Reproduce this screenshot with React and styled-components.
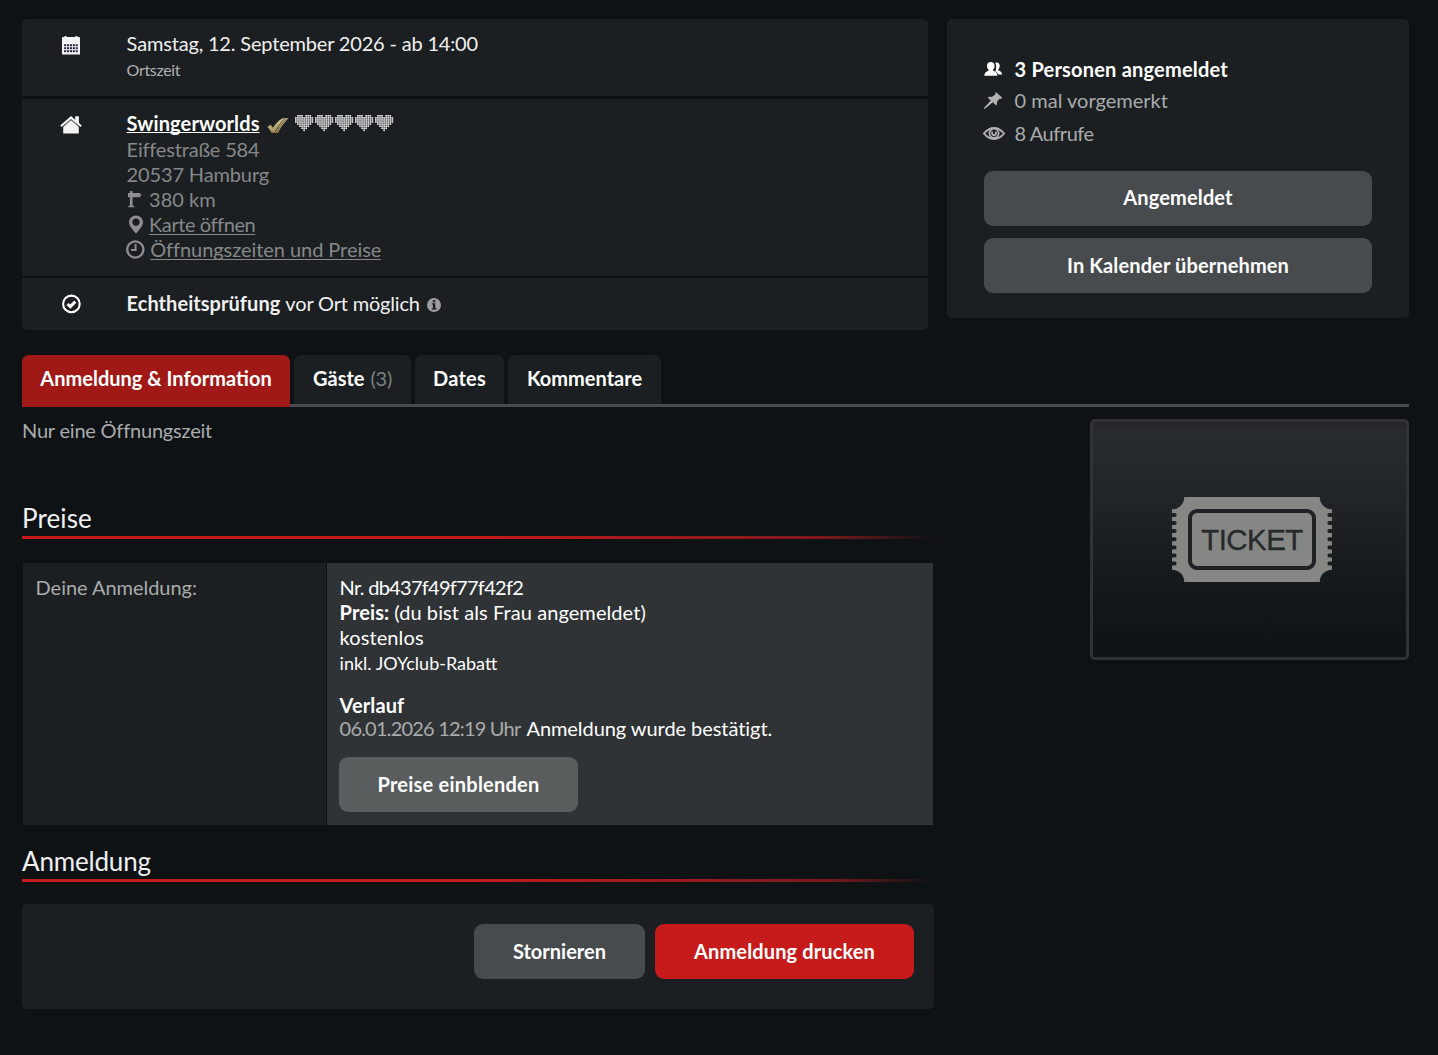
import React from "react";
import styled, { createGlobalStyle } from "styled-components";

const GlobalStyle = createGlobalStyle`
  * { box-sizing: border-box; }
  body {
    margin: 0;
    background: #0e1215;
    color: #fff;
    font: 400 20px/25px Lato, "Liberation Sans", sans-serif;
  }
`;

const Page = styled.main`
  width: 1438px;
  min-height: 1055px;
  padding: 19px 29px 0 22px;
`;

const Text = styled.span`
  color: ${(p) => p.$color || "inherit"};
  font-size: ${(p) => p.$size || 20}px;
  font-weight: ${(p) => (p.$bold ? 700 : 400)};
  letter-spacing: ${(p) => p.$track || 0}px;
  white-space: nowrap;
`;

const Link = styled.a`
  color: ${(p) => p.$color || "inherit"};
  font-weight: ${(p) => (p.$bold ? 700 : 400)};
  letter-spacing: ${(p) => p.$track || 0}px;
  text-decoration: underline;
  text-decoration-thickness: 1px;
  text-underline-offset: ${(p) => (p.$bold ? 1 : 2)}px;
  text-decoration-skip-ink: none;
  white-space: nowrap;
`;

const Icon = styled.svg`
  display: block;
  flex: none;
  overflow: visible;
`;

const Top = styled.header`
  display: flex;
  align-items: flex-start;
  gap: 19px;
`;

const Facts = styled.section`
  width: 906px;
  display: grid;
  grid-template-rows: 77px 177px 52px;
  row-gap: 2.5px;
  height: 311px;
  border-radius: 5px;
  overflow: hidden;
`;

const Fact = styled.div`
  display: grid;
  grid-template-columns: 66.6px 1fr;
  padding: ${(p) => p.$top || 12}px 0 0 38px;
  background: #1b1f21;
`;

const FactIcon = styled.div`
  padding-top: ${(p) => p.$top || 0}px;
`;

const FactBody = styled.div`
  display: flex;
  flex-direction: column;
`;

const Line = styled.div`
  display: flex;
  align-items: center;
  height: ${(p) => p.$height || 25}px;
  line-height: ${(p) => p.$height || 25}px;
  gap: ${(p) => p.$gap || 0}px;
  color: ${(p) => p.$color || "inherit"};
`;

const Venue = styled(Line)`
  align-items: flex-start;
  margin-bottom: 1px;
`;

const VenueIcon = styled.div`
  padding-top: ${(p) => p.$top}px;
  margin-left: ${(p) => p.$left}px;
`;

const SmallIcon = styled.div`
  width: ${(p) => p.$width || 23.1}px;
  margin-left: -0.6px;
  flex: none;
`;

const Stats = styled.aside`
  width: 462px;
  height: 299px;
  padding: 38px 37px 0;
  border-radius: 5px;
  background: #1b1f21;
`;

const StatList = styled.div`
  display: flex;
  flex-direction: column;
  margin-bottom: 25px;
`;

const StatLine = styled(Line)`
  margin-top: ${(p) => p.$above || 0}px;
`;

const StatIcon = styled.div`
  width: 31.6px;
  margin-left: -1px;
  padding-bottom: ${(p) => p.$lift || 0}px;
  flex: none;
`;

const Stack = styled.div`
  display: flex;
  flex-direction: column;
  gap: 12px;
`;

const Button = styled.button`
  height: 55px;
  width: ${(p) => (p.$width ? p.$width + "px" : "100%")};
  padding: 0 0 ${(p) => p.$lift || 0}px;
  border: 0;
  border-radius: 9px;
  background: ${(p) => p.$bg || "#484b4d"};
  color: #fff;
  font: 700 20px/25px Lato, "Liberation Sans", sans-serif;
  letter-spacing: ${(p) => p.$track || 0}px;
  white-space: nowrap;
`;

const Tabs = styled.nav`
  display: flex;
  align-items: flex-start;
  gap: 4px;
  height: 52px;
  margin-top: 25px;
  background: linear-gradient(#484b4d, #484b4d) bottom / 100% 3px no-repeat;
`;

const Tab = styled.div`
  width: ${(p) => p.$width}px;
  height: ${(p) => (p.$active ? 52 : 49)}px;
  padding-top: 11px;
  display: flex;
  justify-content: center;
  gap: 6px;
  border-radius: 7px 7px 0 0;
  background: ${(p) => (p.$active ? "#a11917" : "#1b1f21")};
`;

const Content = styled.div`
  display: flex;
  justify-content: space-between;
  align-items: flex-start;
`;

const Main = styled.div`
  width: 912px;
  padding-top: 11px;
`;

const Heading = styled.h2`
  height: 38px;
  margin: ${(p) => p.$top}px 0 0;
  padding-bottom: 6px;
  font-weight: 400;
  line-height: 31px;
  background: linear-gradient(90deg, #c71a1b 0, #c71a1b 50%, #7d191b 88%, transparent 100%) bottom / 100% 3px no-repeat;
`;

const Booking = styled.div`
  display: grid;
  grid-template-columns: 303px 606px;
  column-gap: 1px;
  height: 262px;
  margin: 24px 0 0 1px;
`;

const Cell = styled.div`
  padding: 12px 12px 12px 12.6px;
  background: ${(p) => (p.$value ? "#303335" : "#1b1f21")};
`;

const Note = styled(Line)`
  padding-top: 1px;
`;

const History = styled.div`
  margin: 17px 0;
  padding-top: 1px;
`;

const ShowPrices = styled(Button)`
  display: block;
  margin-left: -0.6px;
`;

const Actions = styled.div`
  display: flex;
  justify-content: flex-end;
  gap: 10px;
  height: 105px;
  margin-top: 22px;
  padding: 20px 20px 0;
  border-radius: 5px;
  background: #1b1f21;
`;

const TicketBox = styled.div`
  display: flex;
  align-items: center;
  justify-content: center;
  width: 319px;
  height: 241px;
  margin-top: 12px;
  padding-left: 5px;
  border: 3px solid #303335;
  border-radius: 5px;
  background: linear-gradient(#222425 0, #282b2d 8px, #242729 25%, #1b1f21 50%, #12171a 75%, #0e1215 100%);
`;

const CalendarIcon = () => (
  <Icon width="22" height="19" viewBox="0 0 22 19">
    <path d="M2 2q0-1 1-1h1.500V0h2v1h9V0h2v1H19q1 0 1 1v16.400H2z" fill="#f3f3f3" />
    {[8.2, 11.2, 14.2].map((y) =>
      [4.100, 7, 9.900, 12.800, 15.700].map((x) => (
        <rect key={`${x}-${y}`} x={x} y={y} width="2.100" height="2" fill="#2a2a48" />
      ))
    )}
  </Icon>
);

const HouseIcon = () => (
  <Icon width="22" height="18" viewBox="0 0 22 18">
    <path d="M11 3.500 3.200 10.200V17.600h15.600v-7.400z" fill="#f3f3f3" />
    <path d="M3 10.800 11 3.800l8 7" fill="none" stroke="#5d6062" strokeWidth="1" />
    <path d="M11 0 .2 9.600l1.300 1.300L11 2.900l9.500 8 1.300-1.300-2.900-2.600V.2h-3.700v3.500z" fill="#f3f3f3" />
  </Icon>
);

const CheckCircleIcon = () => (
  <Icon width="22" height="19" viewBox="0 0 22 19" fill="none" stroke="#fff">
    <circle cx="11.400" cy="9.900" r="8.300" strokeWidth="2.100" />
    <path d="m7.600 10 2.700 2.600 5-5" strokeWidth="3" />
  </Icon>
);

const GoldChecks = () => (
  <Icon width="22" height="16" viewBox="0 0 22 16">
    <defs>
      <linearGradient id="gold" x1="0" y1="0" x2="0.2" y2="1">
        <stop offset="0" stopColor="#e0d4a2" />
        <stop offset="1" stopColor="#a18c55" />
      </linearGradient>
    </defs>
    <path d="M.3 8.900 3.400 6.800 6 9.700C9 5.400 12 2.100 15.800.3h2.200C13.800 4.200 10.600 9 7.600 14.800H4.500C3.500 12.500 2.200 10.500.3 8.900z" fill="url(#gold)" />
    <path d="M18.300.3h3.200C17.200 4.400 13.800 9.300 11 15H7.900C10.900 9 14.200 4 18.300.3z" fill="url(#gold)" />
    <path d="M20 .5C15.600 4.700 12.200 9.500 9.600 15" stroke="#54492c" strokeWidth=".7" fill="none" />
    <path d="M17.900.5C13.700 4.700 10.600 9.300 7.900 14.600" stroke="#54492c" strokeWidth=".6" fill="none" />
  </Icon>
);

const heartRows = [".XXX.XXX.", "XXXXXXXXX", "XXXXXXXXX", "XXXXXXXXX", ".XXXXXXX.", "..XXXXX..", "...XXX...", "....X...."];

const Hearts = () => (
  <Icon width="100" height="17" viewBox="0 0 100 17" fill="#e9e9ea">
    {[0, 1, 2, 3, 4].map((n) =>
      heartRows.map((row, y) =>
        [...row].map((c, x) =>
          c === "X" ? <rect key={`${n}-${x}-${y}`} x={n * 20 + x * 2.070} y={y * 2.070} width="1.650" height="1.650" /> : null
        )
      )
    )}
  </Icon>
);

const SignIcon = () => (
  <Icon width="18" height="17" viewBox="0 0 18 17" fill="#8b8d8e">
    <path d="M3.900 0h2.700v1.900h7l2 2.200-2 2.200h-7V14.700h1.600v1.600H2.400v-1.600h1.500V6.300H2V1.900h1.900z" />
  </Icon>
);

const MarkerIcon = () => (
  <Icon width="18" height="19" viewBox="0 0 18 19">
    <path d="M10 .4c-4 0-7 3-7 6.700C3 11 6.600 15 10 18.600c3.400-3.600 7-7.600 7-11.500C17 3.400 14 .4 10 .4zm0 3a3.600 3.600 0 1 1 0 7.300 3.600 3.600 0 0 1 0-7.300z" fill="#8b8d8e" fillRule="evenodd" />
  </Icon>
);

const ClockIcon = () => (
  <Icon width="19" height="19" viewBox="0 0 19 19" fill="none" stroke="#8b8d8e">
    <circle cx="9.300" cy="9.500" r="8.100" strokeWidth="2.400" />
    <path d="M9.600 4v6H5" strokeWidth="2" />
  </Icon>
);

const InfoIcon = () => (
  <Icon width="14" height="14" viewBox="0 0 14 14">
    <circle cx="7" cy="7" r="7" fill="#9b9d9e" />
    <path d="M5.800 2.300h2.500v2H5.800zM4.800 5.300h3.500v4.900h1.200v1.300H4.700v-1.300h1.200V6.600H4.800z" fill="#1b1f21" />
  </Icon>
);

const PeopleIcon = () => (
  <Icon width="20" height="14" viewBox="0 0 20 14" fill="#fff">
    <path d="M12.300.9C13.600 0 16.700.6 16.700 3.800c0 1.700-.6 2.700-1.300 3.600v1.200c2 .7 3.500 1.600 3.800 3.900h-3.900c-.5-1.600-1.700-2.500-3.100-3.100 1.200-2.200 1.500-6 .1-8.500z" />
    <path d="M7.800 0C5.300 0 4 1.600 4 3.900c0 1.600.7 2.800 1.500 3.700v1.100C3 9.700 1.400 10.900 1.200 13.800h13.300c-.2-2.900-1.700-4.100-4.400-5.100V7.600c.9-.9 1.500-2.100 1.500-3.700C11.600 1.600 10.300 0 7.800 0z" />
  </Icon>
);

const PinIcon = () => (
  <Icon width="20" height="17" viewBox="0 0 20 17" fill="#b1b2b3">
    <path d="m13.200.2 6 5.600-1.100 1.100-1.200-.3-3 3.100c.4 1.500.1 2.700-.8 3.700L9.800 10.300 2.400 16.600.9 17l.5-1.500 6.400-7L4.600 5.600c1.200-.9 2.500-1.100 4-.5l3.700-2.700-.2-1.100z" />
  </Icon>
);

const EyeIcon = () => (
  <Icon width="22" height="13" viewBox="0 0 22 13" fill="none" stroke="#b1b2b3">
    <path d="M.9 6.500C4.200 2.600 7.300 1 11 1s6.800 1.600 10.100 5.500C17.800 10.400 14.700 12 11 12S4.200 10.400.9 6.500z" strokeWidth="1.900" />
    <circle cx="11" cy="6.300" r="4.600" strokeWidth="1.800" />
    <path d="M9.100 4.600v1.900c0 2.200 3.900 2.200 3.900 0V4.600" strokeWidth="1.700" />
  </Icon>
);

const notches = [18, 26, 34.100, 42.300, 50.400, 58.500, 66.600];

const TicketIcon = () => (
  <Icon width="160" height="85" viewBox="0 0 160 85">
    <mask id="edge">
      <rect width="160" height="85" fill="#fff" />
      {[[0, 0], [160, 0], [0, 85], [160, 85]].map(([x, y]) => (
        <circle key={`${x}-${y}`} cx={x} cy={y} r="12.300" fill="#000" />
      ))}
      {notches.map((y) => (
        <path key={y} d={`M-3 ${y}H2.600M163 ${y}h-5.600`} stroke="#000" strokeWidth="4" strokeLinecap="round" />
      ))}
    </mask>
    <rect width="160" height="85" fill="#868684" mask="url(#edge)" />
    <rect x="18" y="14" width="124" height="57" rx="7" fill="none" stroke="#1e2225" strokeWidth="4" />
    <text x="29.300" y="53" fill="#25292b" stroke="#25292b" strokeWidth=".3" fontFamily='"Liberation Sans", Arial, sans-serif' fontSize="29.500" textLength="102">TICKET</text>
  </Icon>
);

const muted = "#86888a";
const soft = "#a9abac";

export default function App() {
  return (
    <Page>
      <GlobalStyle />
      <Top>
        <Facts>
          <Fact>
            <FactIcon $top={5}><CalendarIcon /></FactIcon>
            <FactBody>
              <Line><Text $track={-0.175} $color="#f0f0f0">Samstag, 12. September 2026 - ab 14:00</Text></Line>
              <Line $height={28}><Text $size={16} $track={-0.33} $color="#b0b2b3">Ortszeit</Text></Line>
            </FactBody>
          </Fact>
          <Fact $top={12}>
            <FactIcon $top={5}><HouseIcon /></FactIcon>
            <FactBody>
              <Venue>
                <Link $bold $track={0.11}>Swingerworlds</Link>
                <VenueIcon $top={7} $left={7.5}><GoldChecks /></VenueIcon>
                <VenueIcon $top={4} $left={6}><Hearts /></VenueIcon>
              </Venue>
              <Line $color={muted}><Text $track={-0.18}>Eiffestraße 584</Text></Line>
              <Line $color={muted}><Text $track={-0.14}>20537 Hamburg</Text></Line>
              <Line $color={muted}><SmallIcon><SignIcon /></SmallIcon><Text>380 km</Text></Line>
              <Line $color={muted}><SmallIcon><MarkerIcon /></SmallIcon><Link $track={-0.42}>Karte öffnen</Link></Line>
              <Line $color={muted}><SmallIcon $width={24.2}><ClockIcon /></SmallIcon><Link $track={-0.06}>Öffnungszeiten und Preise</Link></Line>
            </FactBody>
          </Fact>
          <Fact $top={13}>
            <FactIcon $top={3}><CheckCircleIcon /></FactIcon>
            <FactBody>
              <Line $gap={5}>
                <Text $bold $track={0.05} $color="#f0f0f0">Echtheitsprüfung</Text>
                <Text $track={-0.18} $color="#f0f0f0">vor Ort möglich</Text>
                <VenueIcon $top={3} $left={2.3}><InfoIcon /></VenueIcon>
              </Line>
            </FactBody>
          </Fact>
        </Facts>
        <Stats>
          <StatList>
            <StatLine><StatIcon $lift={2}><PeopleIcon /></StatIcon><Text $bold $track={0.2}>3 Personen angemeldet</Text></StatLine>
            <StatLine $above={6} $color={soft}><StatIcon><PinIcon /></StatIcon><Text>0 mal vorgemerkt</Text></StatLine>
            <StatLine $above={8} $color={soft}><StatIcon><EyeIcon /></StatIcon><Text $track={-0.45}>8 Aufrufe</Text></StatLine>
          </StatList>
          <Stack>
            <Button $track={0.13} $lift={2}>Angemeldet</Button>
            <Button $track={0.12}>In Kalender übernehmen</Button>
          </Stack>
        </Stats>
      </Top>

      <Tabs>
        <Tab $active $width={268}><Text $bold>Anmeldung &amp; Information</Text></Tab>
        <Tab $width={117}><Text $bold>Gäste</Text><Text $track={-0.3} $color="#7e8183">(3)</Text></Tab>
        <Tab $width={89}><Text $bold $track={0.2}>Dates</Text></Tab>
        <Tab $width={153}><Text $bold>Kommentare</Text></Tab>
      </Tabs>

      <Content>
        <Main>
          <Line $color={soft}><Text $track={-0.2}>Nur eine Öffnungszeit</Text></Line>
          <Heading $top={58}><Text $size={26} $track={0.1} $color="#f0f0f0">Preise</Text></Heading>
          <Booking>
            <Cell><Line $color={soft}><Text $track={-0.04}>Deine Anmeldung:</Text></Line></Cell>
            <Cell $value>
              <Line><Text $track={-0.72}>Nr. db437f49f77f42f2</Text></Line>
              <Line $gap={5}><Text $bold $track={0.1}>Preis:</Text><Text $track={0.08}>(du bist als Frau angemeldet)</Text></Line>
              <Line><Text $track={0.1}>kostenlos</Text></Line>
              <Note><Text $size={18}>inkl. JOYclub-Rabatt</Text></Note>
              <History>
                <Line $height={24}><Text $bold $track={0.1}>Verlauf</Text></Line>
                <Line $height={23} $gap={6}><Text $track={-0.8} $color={soft}>06.01.2026 12:19 Uhr</Text><Text $track={-0.06}>Anmeldung wurde bestätigt.</Text></Line>
              </History>
              <ShowPrices $width={239} $bg="#5a5d5e" $track={0.23}>Preise einblenden</ShowPrices>
            </Cell>
          </Booking>
          <Heading $top={19}><Text $size={26} $track={-0.17} $color="#f0f0f0">Anmeldung</Text></Heading>
          <Actions>
            <Button $width={171}>Stornieren</Button>
            <Button $width={259} $bg="#c71a1b" $track={0.12}>Anmeldung drucken</Button>
          </Actions>
        </Main>
        <TicketBox><TicketIcon /></TicketBox>
      </Content>
    </Page>
  );
}
